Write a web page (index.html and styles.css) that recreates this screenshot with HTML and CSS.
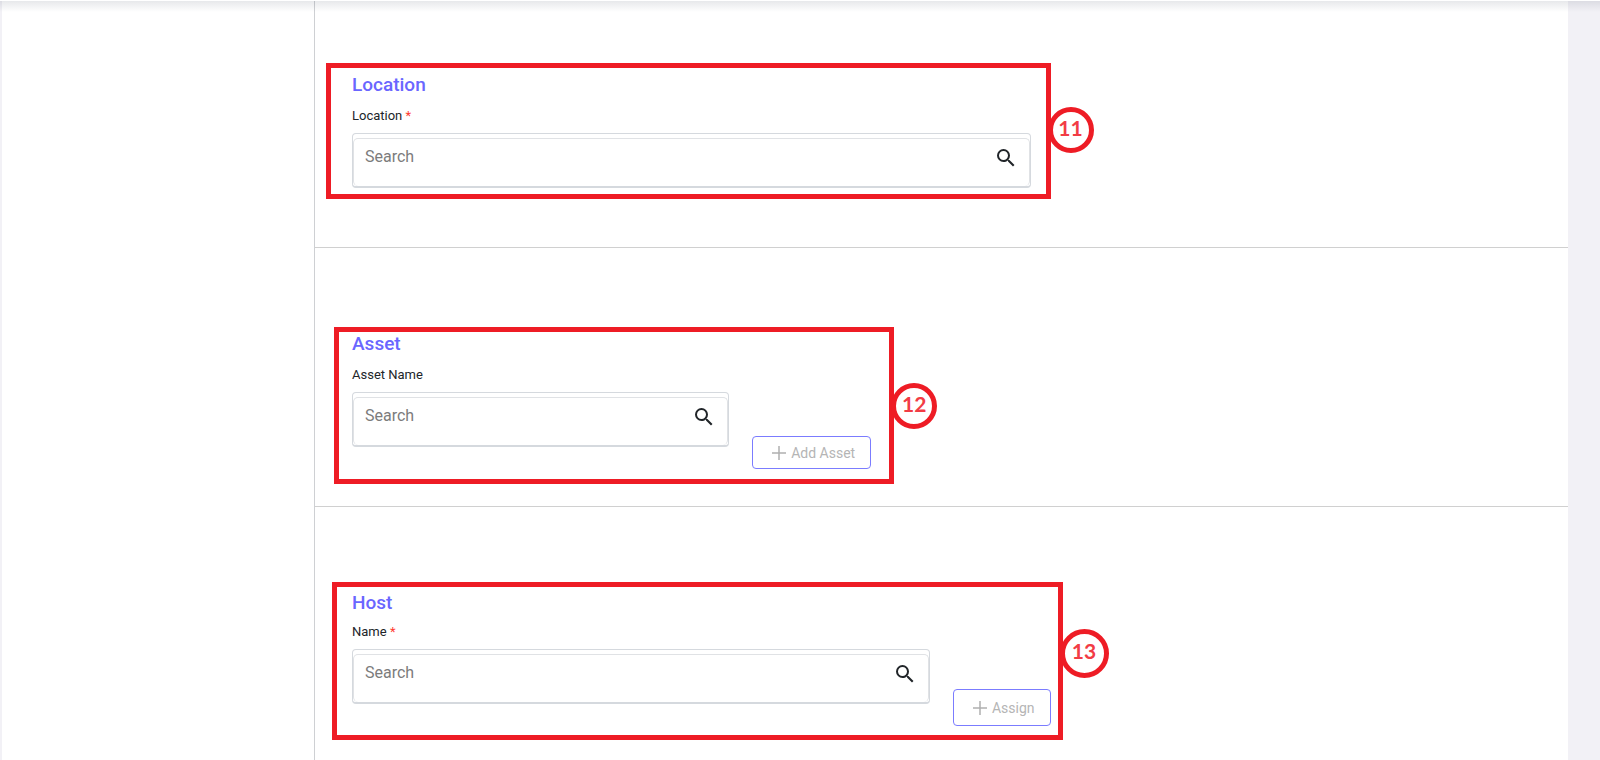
FILE: index.html
```html
<!DOCTYPE html>
<html lang="en">
<head>
<meta charset="utf-8">
<title>Location, Asset and Host</title>
<link rel="stylesheet" href="styles.css">
</head>
<body>
<div class="page">
  <aside class="sidebar"></aside>
  <main class="content">
    <section class="section section-first">
      <div class="block block-location">
        <h2 class="title">Location</h2>
        <label class="label" for="location">Location <span class="required">*</span></label>
        <div class="row">
          <div class="field">
            <div class="field-inner">
              <input class="input" id="location" type="text" placeholder="Search">
              <svg class="search-icon" viewBox="0 0 24 24" aria-hidden="true"><path d="M15.5 14h-.79l-.28-.27A6.471 6.471 0 0 0 16 9.5 6.5 6.5 0 1 0 9.5 16c1.61 0 3.09-.59 4.23-1.57l.27.28v.79l5 4.99L20.49 19l-4.99-5zm-6 0C7.01 14 5 11.99 5 9.5S7.01 5 9.5 5 14 7.01 14 9.5 11.99 14 9.5 14z"/></svg>
            </div>
          </div>
        </div>
        <div class="frame frame-location"><span class="badge">11</span></div>
      </div>
    </section>
    <section class="section">
      <div class="block block-asset">
        <h2 class="title">Asset</h2>
        <label class="label" for="asset">Asset Name</label>
        <div class="row">
          <div class="field">
            <div class="field-inner">
              <input class="input" id="asset" type="text" placeholder="Search">
              <svg class="search-icon" viewBox="0 0 24 24" aria-hidden="true"><path d="M15.5 14h-.79l-.28-.27A6.471 6.471 0 0 0 16 9.5 6.5 6.5 0 1 0 9.5 16c1.61 0 3.09-.59 4.23-1.57l.27.28v.79l5 4.99L20.49 19l-4.99-5zm-6 0C7.01 14 5 11.99 5 9.5S7.01 5 9.5 5 14 7.01 14 9.5 11.99 14 9.5 14z"/></svg>
            </div>
          </div>
          <button class="button" type="button" disabled><svg class="plus" viewBox="0 0 14 14" aria-hidden="true"><path d="M7 0v14M0 7h14"/></svg>Add Asset</button>
        </div>
        <div class="frame frame-asset"><span class="badge">12</span></div>
      </div>
    </section>
    <section class="section">
      <div class="block block-host">
        <h2 class="title">Host</h2>
        <label class="label label-host" for="host">Name <span class="required">*</span></label>
        <div class="row">
          <div class="field">
            <div class="field-inner">
              <input class="input" id="host" type="text" placeholder="Search">
              <svg class="search-icon" viewBox="0 0 24 24" aria-hidden="true"><path d="M15.5 14h-.79l-.28-.27A6.471 6.471 0 0 0 16 9.5 6.5 6.5 0 1 0 9.5 16c1.61 0 3.09-.59 4.23-1.57l.27.28v.79l5 4.99L20.49 19l-4.99-5zm-6 0C7.01 14 5 11.99 5 9.5S7.01 5 9.5 5 14 7.01 14 9.5 11.99 14 9.5 14z"/></svg>
            </div>
          </div>
          <button class="button button-tall" type="button" disabled><svg class="plus" viewBox="0 0 14 14" aria-hidden="true"><path d="M7 0v14M0 7h14"/></svg>Assign</button>
        </div>
        <div class="frame frame-host"><span class="badge badge-large">13</span></div>
      </div>
    </section>
  </main>
</div>
</body>
</html>
```
FILE: styles.css
```css
* {
  box-sizing: border-box;
}

body {
  margin: 0;
  background: #f2f1f6;
  font-family: Roboto, "Liberation Sans", sans-serif;
  color: #212529;
}

.page {
  position: relative;
  display: flex;
  min-height: 100vh;
  padding: 0 32px 0 2px;
}

/* Soft shadow cast by the bar above the page */
.page::before {
  content: "";
  position: absolute;
  inset: 0 0 auto;
  height: 11px;
  border-top: 1px solid #fff;
  background: linear-gradient(rgba(60, 70, 90, 0.12), rgba(60, 70, 90, 0));
  background-clip: padding-box;
}

.sidebar {
  flex: 0 0 312px;
  background: #fff;
}

.content {
  flex: 1;
  min-width: 0;
  background: #fff;
  border-left: 1px solid #ced0d3;
}

.section {
  padding: 84px 36px 37px 37px;
  border-bottom: 1px solid #d0d0d0;
}

.section-first {
  padding-top: 73px;
  padding-bottom: 59px;
}

.section:last-child {
  padding-bottom: 0;
  border-bottom: 0;
}

.block {
  position: relative;
}

.block-location {
  width: 57.5%;
}

.block-asset {
  width: 44%;
}

.block-host {
  width: 59.2%;
}

.title {
  margin: 0;
  font-size: 19px;
  line-height: 24px;
  font-weight: 500;
  color: #6a66ff;
}

.label {
  display: block;
  padding: 9px 0 7px;
  font-size: 13px;
  line-height: 20px;
}

.label-host {
  padding-top: 7px;
}

.required {
  color: #ff3b30;
}

.row {
  display: flex;
  align-items: flex-end;
  gap: 23px;
}

.field {
  flex: 1;
  min-width: 0;
  align-self: flex-start;
  padding-top: 4px;
  border: 1px solid #d5d9de;
  border-bottom-width: 2px;
  border-radius: 4px;
}

.field-inner {
  display: flex;
  align-items: flex-start;
  height: 48px;
  padding: 7px 11px 0 11px;
  border: 1px solid #e0e2e5;
  border-bottom: 0;
  border-radius: 5px;
}

.input {
  flex: 1;
  min-width: 0;
  height: 22px;
  padding: 0;
  border: 0;
  outline: 0;
  background: none;
  font: 16px/22px Roboto, "Liberation Sans", sans-serif;
  color: #212529;
}

.input::placeholder {
  color: #7c7c7c;
  opacity: 1;
}

.search-icon {
  width: 24px;
  height: 24px;
  fill: #212529;
}

.button {
  display: flex;
  align-items: center;
  justify-content: center;
  gap: 5px;
  height: 33px;
  margin-top: 44px;
  padding: 0 15px 0 19px;
  border: 1px solid #7b7cff;
  border-radius: 4px;
  background: #fff;
  font: 14px/20px Roboto, "Liberation Sans", sans-serif;
  color: #b5b5b5;
}

.button-tall {
  height: 37px;
  margin-top: 40px;
}

.plus {
  width: 14px;
  height: 14px;
  fill: none;
  stroke: #b0b0b0;
  stroke-width: 1.5;
}

/* Numbered callouts laid over the form */
.frame {
  position: absolute;
  border: 5px solid #ee1c25;
  pointer-events: none;
}

.frame-location {
  inset: -10px -20px -11px -26px;
}

.frame-asset {
  inset: -5px -23px -15px -18px;
}

.frame-host {
  inset: -9px -12px -14px -20px;
}

.badge {
  position: absolute;
  top: 39px;
  left: calc(100% + 2px);
  display: flex;
  align-items: center;
  justify-content: center;
  width: 46px;
  height: 46px;
  padding-bottom: 4px;
  border: 5px solid #ee1c25;
  border-radius: 50%;
  background: #fff;
  font: bold 21px/24px Lato, "Open Sans", sans-serif;
  color: #f23c45;
}

.frame-asset .badge {
  top: 51px;
}

.frame-host .badge {
  top: 42px;
}

.badge-large {
  width: 49px;
  height: 49px;
  padding-bottom: 6px;
}
```
